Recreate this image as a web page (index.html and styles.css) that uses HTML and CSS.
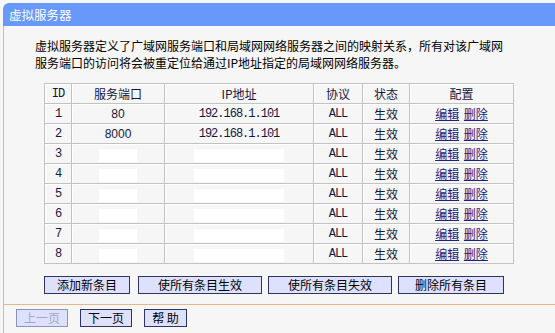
FILE: index.html
```html
<!DOCTYPE html>
<html lang="zh-CN">
<head>
    <meta charset="UTF-8">
    <title>虚拟服务器</title>
    <link rel="stylesheet" href="styles.css">
</head>
<body>

<div class="title-bar">虚拟服务器</div>

<div class="frame">
    <div class="content">
        <p class="intro">虚拟服务器定义了广域网服务端口和局域网网络服务器之间的映射关系，所有对该广域网<br>服务端口的访问将会被重定位给通过IP地址指定的局域网网络服务器。</p>

        <table class="rule-table">
            <colgroup>
                <col class="col-id"><col class="col-port"><col class="col-ip">
                <col class="col-proto"><col class="col-state"><col class="col-conf">
            </colgroup>
            <tr><th class="latin">ID</th><th>服务端口</th><th>IP地址</th><th>协议</th><th>状态</th><th>配置</th></tr>
            <tr><td class="latin">1</td><td class="port">80</td><td class="latin">192.168.1.101</td><td class="latin">ALL</td><td>生效</td><td><a href="#">编辑</a> <a href="#">删除</a></td></tr>
            <tr><td class="latin">2</td><td class="port">8000</td><td class="latin">192.168.1.101</td><td class="latin">ALL</td><td>生效</td><td><a href="#">编辑</a> <a href="#">删除</a></td></tr>
            <tr><td class="latin">3</td><td><span class="mask mask-port"></span></td><td><span class="mask mask-ip"></span></td><td class="latin">ALL</td><td>生效</td><td><a href="#">编辑</a> <a href="#">删除</a></td></tr>
            <tr><td class="latin">4</td><td><span class="mask mask-port"></span></td><td><span class="mask mask-ip"></span></td><td class="latin">ALL</td><td>生效</td><td><a href="#">编辑</a> <a href="#">删除</a></td></tr>
            <tr><td class="latin">5</td><td><span class="mask mask-port"></span></td><td><span class="mask mask-ip"></span></td><td class="latin">ALL</td><td>生效</td><td><a href="#">编辑</a> <a href="#">删除</a></td></tr>
            <tr><td class="latin">6</td><td><span class="mask mask-port"></span></td><td><span class="mask mask-ip"></span></td><td class="latin">ALL</td><td>生效</td><td><a href="#">编辑</a> <a href="#">删除</a></td></tr>
            <tr><td class="latin">7</td><td><span class="mask mask-port"></span></td><td><span class="mask mask-ip"></span></td><td class="latin">ALL</td><td>生效</td><td><a href="#">编辑</a> <a href="#">删除</a></td></tr>
            <tr><td class="latin">8</td><td><span class="mask mask-port"></span></td><td><span class="mask mask-ip"></span></td><td class="latin">ALL</td><td>生效</td><td><a href="#">编辑</a> <a href="#">删除</a></td></tr>
        </table>

        <div class="table-actions">
            <button class="btn btn-add">添加新条目</button>
            <button class="btn btn-enable">使所有条目生效</button>
            <button class="btn btn-disable">使所有条目失效</button>
            <button class="btn btn-remove">删除所有条目</button>
        </div>
    </div>

    <div class="page-nav">
        <button class="btn btn-nav" disabled>上一页</button>
        <button class="btn btn-nav">下一页</button>
        <button class="btn btn-help">帮 助</button>
    </div>
</div>

</body>
</html>
```

FILE: styles.css
```css
body {
    margin: 0;
    background-color: #f6f6f6;
    font-family: "Noto Sans CJK SC", sans-serif;
    font-size: 12px;
    color: #000;
}
.title-bar {
    margin: 3px 0 0 3px;
    height: 23px;
    line-height: 23px;
    padding-left: 6px;
    background-color: #6898fa;
    color: white;
    font-size: 12.5px;
    border-top-left-radius: 6px;
}
.frame {
    margin-left: 3px;
    border-left: 1px solid #e4b886;
    height: 307px;
}
.content {
    padding: 11px 0 10px 31px;
    border-bottom: 1px solid #e4b886;
}
.intro {
    margin: 0;
    line-height: 17px;
}
.rule-table {
    margin: 12px 0 0 9px;
    width: 469px;
    table-layout: fixed;
    border-collapse: collapse;
    color: #16163e;
}
.col-id { width: 27px; }
.col-port { width: 93px; }
.col-ip { width: 149px; }
.col-proto { width: 49px; }
.col-state { width: 47px; }
.col-conf { width: 104px; }
.rule-table th,
.rule-table td {
    height: 19px;
    padding: 0;
    border: 1px solid #c2c2c2;
    box-shadow: inset 1px 1px 0 #fff;
    text-align: center;
    font-weight: normal;
    line-height: 18px;
}
.rule-table .latin {
    font-family: "Liberation Mono", monospace;
    font-size: 12px;
    letter-spacing: -1px;
}
.rule-table .port {
    font-family: "Liberation Sans", sans-serif;
}
.mask {
    display: inline-block;
    height: 13px;
    vertical-align: middle;
    background-color: #fff;
}
.mask-port { width: 38px; }
.mask-ip { width: 90px; }
.rule-table a {
    color: #1a2282;
    text-decoration: underline;
}
.rule-table a + a {
    margin-left: 2px;
}
.table-actions {
    display: flex;
    margin: 12px 0 0 9px;
}
.btn {
    height: 18px;
    padding: 0;
    border: 1px solid #2e3360;
    background-color: #dde1fd;
    color: #000;
    font-family: "Noto Sans CJK SC", sans-serif;
    font-size: 12px;
    line-height: 16px;
}
.btn:disabled {
    color: #a2a8c0;
    border-color: #8b94b8;
}
.btn-add { width: 86px; }
.btn-enable { width: 124px; margin-left: 8px; }
.btn-disable { width: 124px; margin-left: 6px; }
.btn-remove { width: 106px; margin-left: 6px; }
.page-nav {
    display: flex;
    gap: 12px;
    padding: 4px 0 0 12px;
}
.btn-nav { width: 52px; }
.btn-help { width: 43px; }
```
